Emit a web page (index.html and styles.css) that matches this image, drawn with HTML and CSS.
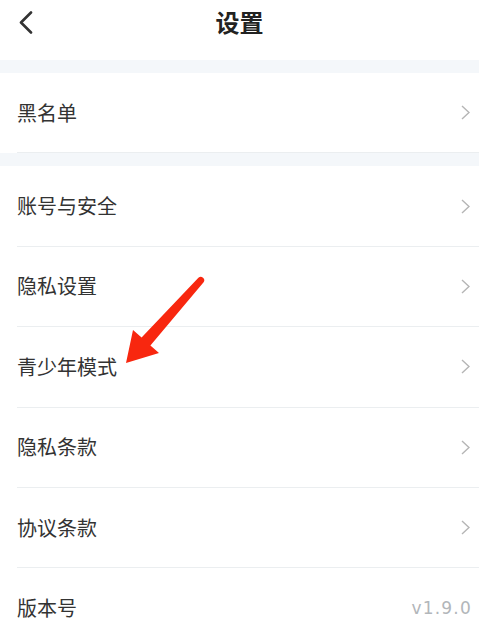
FILE: index.html
```html
<!DOCTYPE html>
<html lang="zh-CN">
<head>
<meta charset="utf-8">
<title>设置</title>
<link rel="stylesheet" href="styles.css">
</head>
<body>
<div class="page">
  <header class="nav">
    <span class="back">
      <svg width="14" height="23" viewBox="0 0 14 23"><path d="M12 1.5 L2 11.5 L12 21.5" fill="none" stroke="#333" stroke-width="2.6" stroke-linecap="round" stroke-linejoin="round"/></svg>
    </span>
    <h1 class="title">设置</h1>
    <span></span>
  </header>
  <div class="gap"></div>
  <section class="group">
    <div class="row"><div class="row-inner"><span class="label">黑名单</span><svg class="chev" width="9" height="15" viewBox="0 0 9 15"><path d="M1 1 L8 7.5 L1 14" fill="none" stroke="#b5b5b5" stroke-width="1.4"/></svg></div></div>
  </section>
  <div class="gap"></div>
  <section class="group">
    <div class="row"><div class="row-inner"><span class="label">账号与安全</span><svg class="chev" width="9" height="15" viewBox="0 0 9 15"><path d="M1 1 L8 7.5 L1 14" fill="none" stroke="#b5b5b5" stroke-width="1.4"/></svg></div></div>
    <div class="row"><div class="row-inner"><span class="label">隐私设置</span><svg class="chev" width="9" height="15" viewBox="0 0 9 15"><path d="M1 1 L8 7.5 L1 14" fill="none" stroke="#b5b5b5" stroke-width="1.4"/></svg></div></div>
    <div class="row"><div class="row-inner"><span class="label">青少年模式</span><svg class="chev" width="9" height="15" viewBox="0 0 9 15"><path d="M1 1 L8 7.5 L1 14" fill="none" stroke="#b5b5b5" stroke-width="1.4"/></svg></div></div>
    <div class="row"><div class="row-inner"><span class="label">隐私条款</span><svg class="chev" width="9" height="15" viewBox="0 0 9 15"><path d="M1 1 L8 7.5 L1 14" fill="none" stroke="#b5b5b5" stroke-width="1.4"/></svg></div></div>
    <div class="row"><div class="row-inner"><span class="label">协议条款</span><svg class="chev" width="9" height="15" viewBox="0 0 9 15"><path d="M1 1 L8 7.5 L1 14" fill="none" stroke="#b5b5b5" stroke-width="1.4"/></svg></div></div>
    <div class="row"><div class="row-inner"><span class="label">版本号</span><span class="version">v1.9.0</span></div></div>
  </section>
  <svg class="arrow" width="479" height="629" viewBox="0 0 479 629">
    <path d="M198.4 277.7 L141.6 337.5 L133 330 L126 363 L159 353 L150.4 345.5 L203.6 282.3 A3.5 3.5 0 0 0 198.4 277.7 Z" fill="#f8270f"/>
  </svg>
</div>
</body>
</html>
```

FILE: styles.css
```css
html, body {
  margin: 0;
  padding: 0;
  background: #ffffff;
}

.page {
  position: relative;
  width: 479px;
  height: 629px;
  overflow: hidden;
  font-family: "Noto Sans CJK SC", "Noto Sans", sans-serif;
  color: #333333;
}

.nav {
  height: 60px;
  box-sizing: border-box;
  padding-bottom: 16px;
  display: grid;
  grid-template-columns: 1fr auto 1fr;
  align-items: center;
}

.back {
  display: flex;
  align-items: center;
  padding-left: 19px;
}

.back svg {
  display: block;
}

.title {
  margin: 0;
  font-size: 24px;
  font-weight: 700;
  color: #222222;
  line-height: 1;
}

.gap {
  height: 13px;
  background: #f4f7fa;
}

.group {
  background: #ffffff;
}

.row {
  padding-left: 17px;
}

.row-inner {
  height: 79.4px;
  display: flex;
  align-items: center;
  justify-content: space-between;
  padding-right: 9px;
  border-bottom: 1px solid #ebeef0;
}

.label {
  font-size: 20px;
  line-height: 1;
  color: #333333;
}

.chev {
  display: block;
}

.version {
  font-family: "DejaVu Sans", sans-serif;
  font-size: 17px;
  letter-spacing: 1.2px;
  margin-right: -2px;
  color: #b2b6ba;
}

.arrow {
  position: absolute;
  left: 0;
  top: 0;
  pointer-events: none;
}
```
